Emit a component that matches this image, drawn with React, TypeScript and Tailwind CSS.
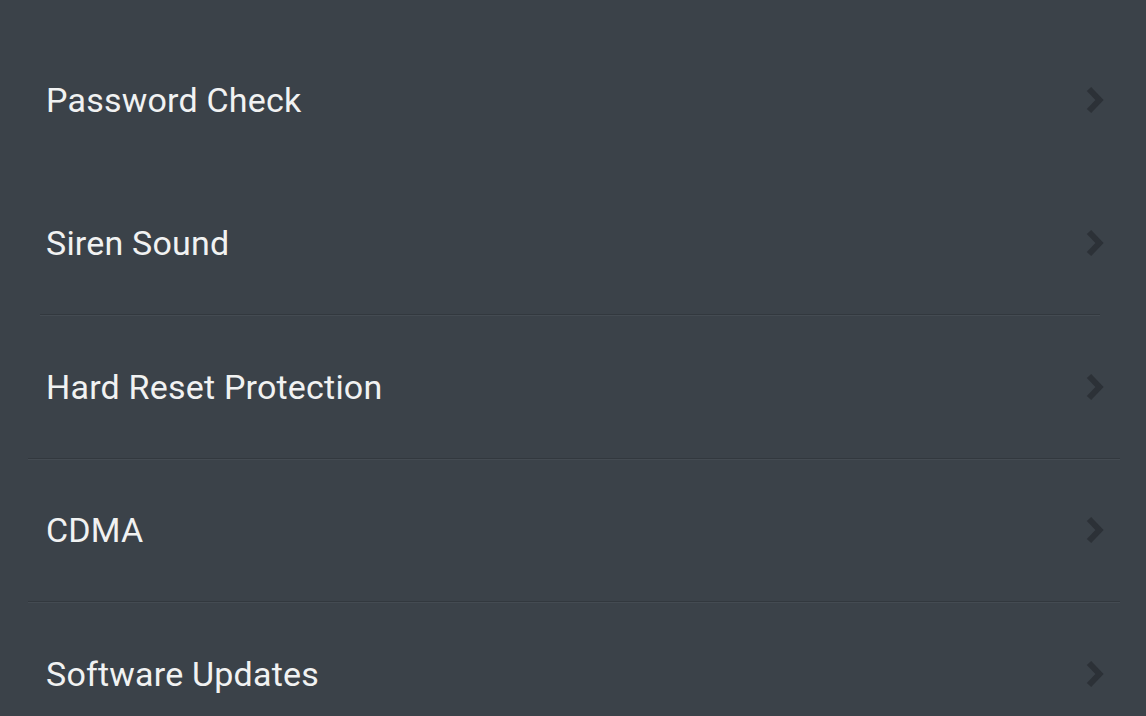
import React from "react";

type Row = { label: string; divider: "none" | "inset" | "wide" };

const rows: Row[] = [
  { label: "Password Check", divider: "none" },
  { label: "Siren Sound", divider: "none" },
  { label: "Hard Reset Protection", divider: "inset" },
  { label: "CDMA", divider: "wide" },
  { label: "Software Updates", divider: "wide" },
];

const Chevron = () => (
  <svg width="22" height="30" viewBox="0 0 22 30" className="shrink-0">
    <path
      d="M5 4 L15.5 15 L5 26"
      fill="none"
      stroke="#2c3137"
      strokeWidth="6"
      strokeLinejoin="miter"
    />
  </svg>
);

const Divider = ({ kind }: { kind: Row["divider"] }) => {
  if (kind === "none") return <div className="h-[2px]" />;
  return (
    <div className={kind === "inset" ? "ml-[40px] mr-[46px]" : "ml-[28px] mr-[26px]"}>
      <div className="h-px bg-[#32383e]" />
      <div className="h-px bg-[#444b52]" />
    </div>
  );
};

export default function App() {
  return (
    <div
      className="w-[1146px] h-[716px] overflow-hidden bg-[#3b4249]"
      style={{ fontFamily: "Roboto, 'Liberation Sans', sans-serif" }}
    >
      <div className="h-[27px]" />
      {rows.map((row) => (
        <div key={row.label}>
          <Divider kind={row.divider} />
          <div className="flex h-[141.5px] items-center justify-between pl-[46px] pr-[40px]">
            <span className="text-[34px] leading-none text-[#f1f2f2] tracking-[0.2px]">
              {row.label}
            </span>
            <Chevron />
          </div>
        </div>
      ))}
    </div>
  );
}
